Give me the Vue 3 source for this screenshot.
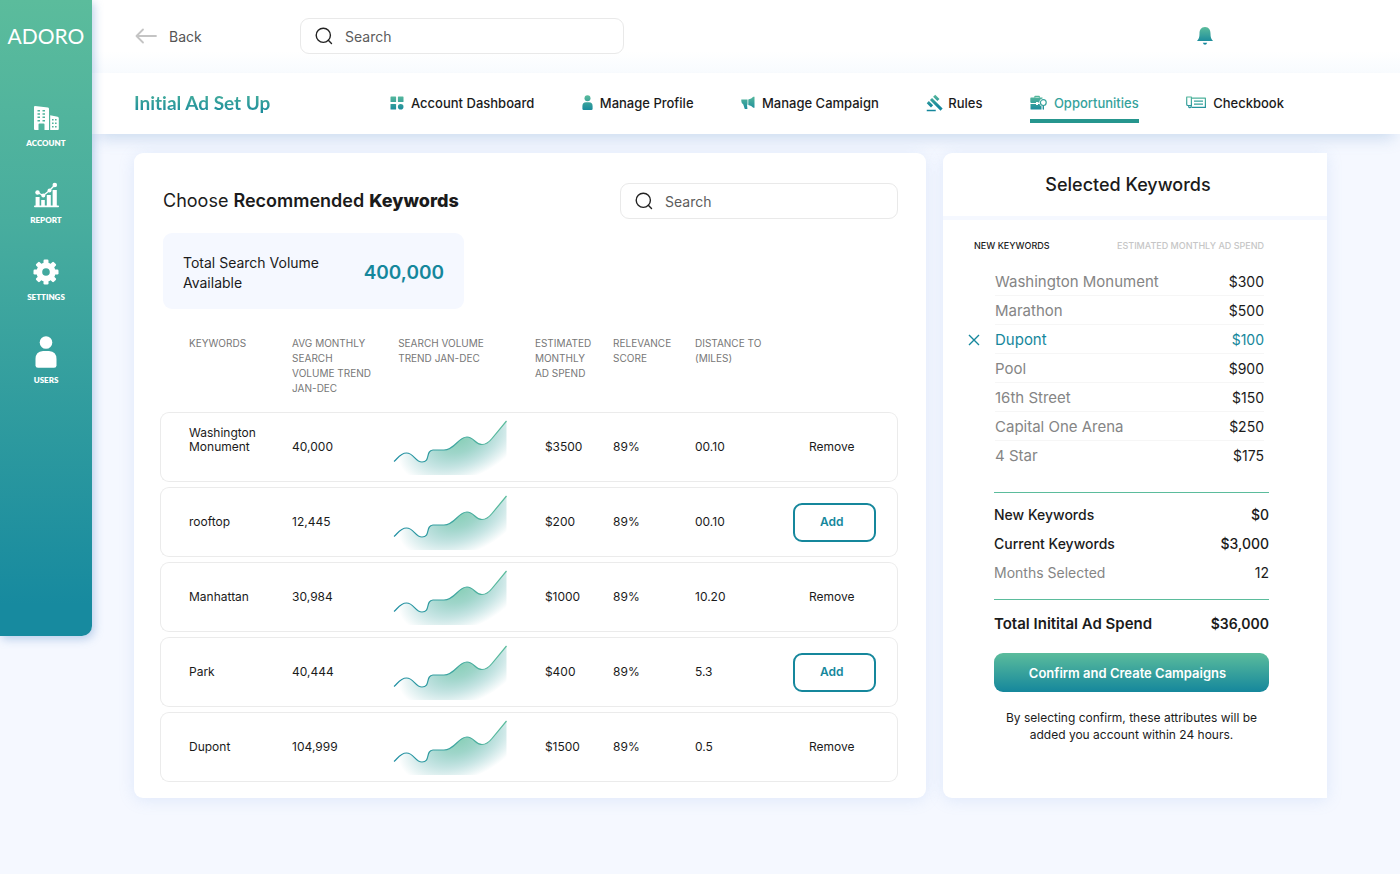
<script setup>
import { ref } from 'vue'

const search = ref('')
const keywordSearch = ref('')

const columns = [
  { key: 'name', label: 'Keywords' },
  { key: 'volume', label: 'Avg Monthly Search Volume Trend Jan-Dec' },
  { key: 'trend', label: 'Search Volume Trend Jan-Dec' },
  { key: 'spend', label: 'Estimated Monthly Ad Spend' },
  { key: 'score', label: 'Relevance Score' },
  { key: 'distance', label: 'Distance to (Miles)' },
]

const keywords = [
  { name: 'Washington Monument', volume: '40,000', spend: '$3500', score: '89%', distance: '00.10', added: true },
  { name: 'rooftop', volume: '12,445', spend: '$200', score: '89%', distance: '00.10', added: false },
  { name: 'Manhattan', volume: '30,984', spend: '$1000', score: '89%', distance: '10.20', added: true },
  { name: 'Park', volume: '40,444', spend: '$400', score: '89%', distance: '5.3', added: false },
  { name: 'Dupont', volume: '104,999', spend: '$1500', score: '89%', distance: '0.5', added: true },
]

const selected = [
  { name: 'Washington Monument', amount: '$300' },
  { name: 'Marathon', amount: '$500' },
  { name: 'Dupont', amount: '$100', active: true },
  { name: 'Pool', amount: '$900' },
  { name: '16th Street', amount: '$150' },
  { name: 'Capital One Arena', amount: '$250' },
  { name: '4 Star', amount: '$175' },
]
</script>

<template>
  <div class="page">
    <svg class="defs" width="0" height="0" aria-hidden="true">
      <defs>
        <linearGradient id="brand" gradientUnits="userSpaceOnUse" x1="0" y1="0" x2="0" y2="16">
          <stop offset="0" stop-color="#5bbc9c" />
          <stop offset="1" stop-color="#15879c" />
        </linearGradient>
        <linearGradient id="trendLine" gradientUnits="userSpaceOnUse" x1="0" y1="0" x2="114" y2="0">
          <stop offset="0" stop-color="#1f8ea3" />
          <stop offset="1" stop-color="#5bbc9c" />
        </linearGradient>
        <radialGradient
          id="trendArea"
          gradientUnits="userSpaceOnUse"
          cx="0"
          cy="0"
          r="1"
          gradientTransform="translate(68 21) rotate(-22) scale(66 39)"
        >
          <stop offset="0" stop-color="#5bbc9c" stop-opacity="0.7" />
          <stop offset="0.3" stop-color="#4fb39d" stop-opacity="0.55" />
          <stop offset="0.65" stop-color="#3aa39f" stop-opacity="0.28" />
          <stop offset="1" stop-color="#2f9aa0" stop-opacity="0" />
        </radialGradient>
      </defs>
    </svg>

    <aside class="sidebar">
      <div class="logo">ADORO</div>
      <nav class="side-nav" aria-label="Main">
        <a href="#account">
          <svg width="25" height="26" viewBox="0 0 25 26" fill="#fff" fill-rule="evenodd">
            <path
              d="M1 1L14 2.6Q15 2.8 15 4V25H10.5V19.5Q10.500 18.500 9.500 18.500H5.500Q4.500 18.500 4.500 19.500V25H1Q0 25 0 24V2Q0 1 1 1Z
              M3.500 5h2.500v1.500h-2.500zM8.500 5h2.500v1.500h-2.500zM3.500 8.300h2.500v1.500h-2.500zM8.500 8.300h2.500v1.500h-2.500z
              M3.500 11.600h2.500v1.500h-2.500zM8.500 11.600h2.500v1.500h-2.500zM3.500 14.900h2.500v1.500h-2.500zM8.500 14.900h2.500v1.500h-2.500z"
            />
            <path
              d="M16.200 10.300L23.600 11.800Q24.800 12 24.800 13.200V24Q24.800 25 23.800 25H16.200Z
              M18 14h1.600v1.600h-1.600zM21 14h1.600v1.600h-1.600zM18 17.500h1.600v1.600h-1.600zM21 17.500h1.600v1.600h-1.600zM18 21h1.600v1.600h-1.600zM21 21h1.600v1.600h-1.600z"
            />
          </svg>
          <span>ACCOUNT</span>
        </a>
        <a href="#report">
          <svg width="25" height="26" viewBox="0 0 25 26" fill="#fff">
            <rect x="0" y="23.600" width="25" height="1.600" rx="0.800" />
            <rect x="1.600" y="15" width="4" height="9" />
            <rect x="7.200" y="18" width="3.600" height="6" />
            <rect x="12.800" y="13" width="4" height="11" />
            <rect x="18.600" y="8" width="4.200" height="16" />
            <path d="M3.500 10.500L9.300 13.500L15.500 8.500L20.800 3" fill="none" stroke="#fff" stroke-width="1.400" />
            <circle cx="3.500" cy="10.500" r="2.200" />
            <circle cx="9.300" cy="13.500" r="2" />
            <circle cx="15.500" cy="8.500" r="2" />
            <circle cx="20.800" cy="3" r="2.300" />
          </svg>
          <span>REPORT</span>
        </a>
        <a href="#settings">
          <svg width="26" height="26" viewBox="-13 -13 26 26" fill="#fff">
            <circle r="6.700" fill="none" stroke="#fff" stroke-width="5.800" />
            <rect
              v-for="n in 8"
              :key="n"
              x="-2.500"
              y="-12.500"
              width="5"
              height="5"
              rx="1.200"
              :transform="`rotate(${n * 45})`"
            />
          </svg>
          <span>SETTINGS</span>
        </a>
        <a href="#users">
          <svg width="22" height="32" viewBox="0 0 22 32" fill="#fff">
            <circle cx="11" cy="6.500" r="6.300" />
            <path d="M8 15H14Q21.500 15.500 21.500 23V29.500Q21.500 31.800 19 31.800H3Q0.500 31.800 0.500 29.500V23Q0.500 15.500 8 15Z" />
          </svg>
          <span>USERS</span>
        </a>
      </nav>
    </aside>

    <div class="content">
      <header class="topbar">
        <a class="back" href="#back">
          <svg width="22" height="16" viewBox="0 0 22 16" fill="none" stroke="#c4c4c4" stroke-width="1.800" stroke-linecap="round" stroke-linejoin="round">
            <path d="M21 8H1.500M8 1.500L1.500 8L8 14.500" />
          </svg>
          Back
        </a>
        <label class="search search-main">
          <svg width="18" height="18" viewBox="0 0 18 18" fill="none" stroke="#222" stroke-width="1.400" stroke-linecap="round">
            <circle cx="8.300" cy="8.300" r="7.100" />
            <path d="M13.300 13.300L16.500 16.500" />
          </svg>
          <input v-model="search" type="text" placeholder="Search" aria-label="Search" />
        </label>
        <button class="bell" type="button" aria-label="Notifications">
          <svg width="16" height="18" viewBox="0 0 16 18">
            <path fill="url(#brand)" d="M8 0C12 0 13.500 3 13.500 6.500C13.500 10.500 14.200 12 16 14H0C1.800 12 2.500 10.500 2.500 6.500C2.500 3 4 0 8 0Z" />
            <path fill="#15879c" d="M5.800 15.800H10.200Q9.500 17.800 8 17.800Q6.500 17.800 5.800 15.800Z" />
          </svg>
        </button>
      </header>

      <div class="navbar">
        <h1>Initial Ad Set Up</h1>
        <nav class="tabs" aria-label="Ad set up">
          <a href="#dashboard">
            <svg width="14" height="16" viewBox="0 0 14 16" fill="url(#brand)">
              <rect x="0.500" y="1.500" width="5.600" height="5.600" rx="0.600" />
              <rect x="7.900" y="1.500" width="5.600" height="5.600" rx="0.600" />
              <rect x="0.500" y="8.900" width="5.600" height="5.600" rx="0.600" />
              <circle cx="10.700" cy="11.700" r="2.800" />
            </svg>
            Account Dashboard
          </a>
          <a href="#profile">
            <svg width="11" height="16" viewBox="0 0 11 16" fill="url(#brand)">
              <circle cx="5.500" cy="3.300" r="3" />
              <path d="M4 7.200H7Q10.600 7.500 10.600 11V13.800Q10.600 15 9.400 15H1.600Q0.400 15 0.400 13.800V11Q0.400 7.500 4 7.200Z" />
            </svg>
            Manage Profile
          </a>
          <a href="#campaign">
            <svg width="14" height="16" viewBox="0 0 14 16" fill="url(#brand)">
              <path d="M0.300 4.500H6.500V9.800H6L6.400 13.500Q6.400 14 5.900 14H4.300Q3.800 14 3.600 13.400L2.300 9.600Q0.300 8.500 0.300 6Z" />
              <path d="M7.300 4.500Q10.500 4 12.300 1.800H13.500V12.800H12.300Q10.500 10.300 7.300 9.900Z" />
            </svg>
            Manage Campaign
          </a>
          <a class="tight" href="#rules">
            <svg width="18" height="18" viewBox="0 0 24 24" fill="url(#brand)">
              <path
                d="M1 21h12v2H1zM5.240 8.070l2.830-2.830 14.140 14.140-2.830 2.830zM12.320 1l5.660 5.660-2.830 2.830-5.660-5.660zM3.830 9.480l5.660 5.660-2.830 2.830L1 12.310z"
              />
            </svg>
            Rules
          </a>
          <a class="active" href="#opportunities" aria-current="page">
            <svg width="17" height="16" viewBox="0 0 17 16" fill="url(#brand)">
              <path d="M4.300 2.800V1.600Q4.300 0.700 5.200 0.700H9Q9.900 0.700 9.900 1.600V2.800H8.800V1.900H5.400V2.800Z" />
              <path d="M1 2.600H12.500V3.600Q9.500 4.200 9.200 7.600H8V7H6V8H1Q0.300 7.500 0.300 6.500V3.500Q0.300 2.600 1 2.600Z" />
              <path d="M0.500 8.900H6V9.900H8V8.900H9.500Q10 10.500 11.500 11.300V14.600H1.200Q0.500 14.600 0.500 13.900Z" />
              <circle cx="13.300" cy="7.600" r="2.900" fill="none" stroke="#35a29c" stroke-width="1.200" />
              <path d="M12.600 10.500H14V14Q14 14.800 13.300 14.800Q12.600 14.800 12.600 14Z" />
            </svg>
            Opportunities
          </a>
          <a href="#checkbook">
            <svg width="20" height="16" viewBox="0 0 20 16" fill="none" stroke="url(#brand)" stroke-width="1.200" stroke-linejoin="round">
              <path d="M5.500 3.200H19.400V12.400H5.500" />
              <path d="M0.700 2H5.400V10.500H2Q0.700 10.500 0.700 9.200Z" />
              <path d="M2.500 10.500Q2.500 12.600 4 12.600Q5.400 12.400 5.400 10.500" />
              <path d="M8 6.200H17M8 9.200H17" stroke="#35a29c" />
            </svg>
            Checkbook
          </a>
        </nav>
      </div>

      <main class="panels">
        <section class="card recommended">
          <div class="card-head">
            <h2>Choose <span class="semi">Recommended</span> <span class="bold">Keywords</span></h2>
            <label class="search search-keywords">
              <svg width="18" height="18" viewBox="0 0 18 18" fill="none" stroke="#222" stroke-width="1.400" stroke-linecap="round">
                <circle cx="8.300" cy="8.300" r="7.100" />
                <path d="M13.300 13.300L16.500 16.500" />
              </svg>
              <input v-model="keywordSearch" type="text" placeholder="Search" aria-label="Search keywords" />
            </label>
          </div>

          <div class="total">
            <span>Total Search Volume Available</span>
            <strong>400,000</strong>
          </div>

          <table class="keywords">
            <colgroup>
              <col v-for="c in columns" :key="c.key" :class="'col-' + c.key" />
              <col />
            </colgroup>
            <thead>
              <tr>
                <th v-for="c in columns" :key="c.key" scope="col" :class="c.key">{{ c.label }}</th>
                <td></td>
              </tr>
            </thead>
            <tbody>
              <tr v-for="k in keywords" :key="k.name">
                <td class="name" :class="{ wraps: k.name.includes(' ') }">{{ k.name }}</td>
                <td>{{ k.volume }}</td>
                <td>
                  <svg class="trend" width="114" height="56" viewBox="0 0 114 56">
                    <path
                      fill="url(#trendArea)"
                      d="M1 42.500C4 40.500 7 34 13.500 34C21 34 22 43 29 43C38 43 32 31.500 40 31H51C62 31 65 18 74 18C81 18 82 25.500 89 25.500C94 25.500 97 22 99 19.500L113.500 2V56H1Z"
                    />
                    <path
                      fill="none"
                      stroke="url(#trendLine)"
                      stroke-width="1.200"
                      d="M1 42.500C4 40.500 7 34 13.500 34C21 34 22 43 29 43C38 43 32 31.500 40 31H51C62 31 65 18 74 18C81 18 82 25.500 89 25.500C94 25.500 97 22 99 19.500L113.500 2"
                    />
                  </svg>
                </td>
                <td class="spend">{{ k.spend }}</td>
                <td>{{ k.score }}</td>
                <td>{{ k.distance }}</td>
                <td>
                  <button v-if="k.added" class="row-action" type="button">Remove</button>
                  <button v-else class="row-action add" type="button">Add</button>
                </td>
              </tr>
            </tbody>
          </table>
        </section>

        <section class="card selection">
          <h2>Selected Keywords</h2>
          <table class="selected">
            <colgroup>
              <col class="col-remove" />
              <col class="col-heading" />
              <col />
              <col class="col-amount" />
            </colgroup>
            <thead>
              <tr>
                <th scope="col" colspan="2">New Keywords</th>
                <th scope="col" colspan="2" class="amount">Estimated Monthly Ad Spend</th>
              </tr>
            </thead>
            <tbody>
              <tr v-for="s in selected" :key="s.name" :class="{ active: s.active }">
                <td class="remove">
                  <button v-if="s.active" type="button" :aria-label="'Remove ' + s.name">
                    <svg width="12" height="12" viewBox="0 0 12 12" fill="none" stroke="#15879c" stroke-width="1.400">
                      <path d="M1 1L11 11M11 1L1 11" />
                    </svg>
                  </button>
                </td>
                <td colspan="2">{{ s.name }}</td>
                <td class="amount">{{ s.amount }}</td>
              </tr>
            </tbody>
          </table>

          <div class="summary">
            <dl class="figures">
              <div><dt>New Keywords</dt><dd>$0</dd></div>
              <div><dt>Current Keywords</dt><dd>$3,000</dd></div>
              <div class="light"><dt>Months Selected</dt><dd>12</dd></div>
            </dl>
            <dl class="grand">
              <div><dt>Total Initital Ad Spend</dt><dd>$36,000</dd></div>
            </dl>
            <button class="confirm" type="button">Confirm and Create Campaigns</button>
            <p>By selecting confirm, these attributes will be added you account within 24 hours.</p>
          </div>
        </section>
      </main>
    </div>
  </div>
</template>

<style>
body {
  background: #f5f8ff;
}
</style>

<style scoped>
.page {
  display: flex;
  align-items: flex-start;
  min-height: 100vh;
  font-family: Inter, "Open Sans", sans-serif;
  font-size: 12px;
  color: #1b1b1b;
  background: #f5f8ff;
}
.page * {
  box-sizing: border-box;
}
.defs {
  position: absolute;
}
a {
  color: inherit;
  text-decoration: none;
}
button,
input {
  font: inherit;
  color: inherit;
  background: none;
  border: 0;
  padding: 0;
}
button {
  cursor: pointer;
}
h1,
h2,
p,
dl,
dd {
  margin: 0;
}

.sidebar {
  position: relative;
  z-index: 1;
  flex: 0 0 92px;
  padding: 23px 0 251px;
  color: #fff;
  text-align: center;
  background: linear-gradient(#5bbc9c, #48ad9e 35%, #178a9f 95%);
  border-radius: 0 0 10px 0;
  box-shadow: 2px 3px 10px rgba(90, 140, 200, 0.4);
}
.logo {
  font: 400 21px/26px Lato, sans-serif;
}
.side-nav {
  display: flex;
  flex-direction: column;
  gap: 34px;
  margin-top: 56px;
}
.side-nav a {
  display: flex;
  flex-direction: column;
  align-items: center;
  gap: 7px;
  font: 800 8px/10px Lato, sans-serif;
}

.content {
  flex: 1;
  min-width: 0;
}
.topbar {
  display: flex;
  align-items: center;
  height: 73px;
  padding: 0 187px 1px 43px;
  background: linear-gradient(#fff 70%, #f8fbfe);
}
.back {
  display: flex;
  align-items: center;
  gap: 12px;
  width: 165px;
  font-size: 14px;
  color: #555;
}
.search {
  display: flex;
  align-items: center;
  gap: 12px;
  height: 36px;
  padding: 0 14px;
  background: #fff;
  border: 1px solid #e9e9e9;
  border-radius: 9px;
}
.search svg {
  flex: none;
}
.search input {
  width: 100%;
  min-width: 0;
  font-size: 14px;
  color: #555;
  outline: none;
}
.search input::placeholder {
  color: #5c5c5c;
  opacity: 1;
}
.search-main {
  flex: 0 1 324px;
}
.search-keywords {
  flex: 0 1 278px;
}
.bell {
  display: flex;
  margin-left: auto;
}

.navbar {
  display: flex;
  align-items: center;
  height: 61px;
  padding: 0 116px 2px 42px;
  background: #fff;
  box-shadow: 0 10px 16px -6px rgba(90, 140, 195, 0.28);
}
h1 {
  flex: 0 0 256px;
  font: 700 19px/24px Lato, sans-serif;
  font-variant-ligatures: none;
  color: transparent;
  background: linear-gradient(#4db39c, #15879c);
  background-clip: text;
}
.tabs {
  display: flex;
  flex: 1;
  justify-content: space-between;
}
.tabs a {
  display: flex;
  align-items: center;
  gap: 7px;
  height: 40px;
  font-size: 13px;
  font-weight: 500;
  white-space: nowrap;
  border: solid transparent;
  border-width: 4px 0;
}
.tabs .tight {
  gap: 4px;
}
.tabs .active {
  color: #35a29c;
  border-bottom-color: #26968e;
}

.panels {
  display: grid;
  grid-template-columns: minmax(0, 792fr) minmax(0, 384fr);
  gap: 17px;
  padding: 19px 73px 76px 42px;
}
.card {
  background: #fff;
  border-radius: 9px;
  box-shadow: 0 2px 16px rgba(120, 160, 230, 0.18);
}
.recommended {
  padding: 30px 28px 11px 26px;
}
.card-head {
  display: flex;
  align-items: center;
  justify-content: space-between;
  padding-left: 3px;
}
h2 {
  font-size: 18px;
  font-weight: 400;
  line-height: 24px;
}
.semi {
  font-weight: 600;
}
.bold {
  font-weight: 800;
}
.total {
  display: flex;
  align-items: center;
  justify-content: space-between;
  width: 301px;
  margin: 14px 0 22px 3px;
  padding: 20px 20px 16px;
  font-size: 14px;
  line-height: 20px;
  background: #f5f8ff;
  border-radius: 9px;
}
.total span {
  width: 150px;
}
.total strong {
  font-size: 19px;
  font-weight: 600;
  color: #15879c;
}

.keywords {
  width: 100%;
  table-layout: fixed;
  border-collapse: separate;
  border-spacing: 0 5px;
  line-height: 14px;
}
.col-name { width: 17.9%; }
.col-volume { width: 13.7%; }
.col-trend { width: 19.2%; }
.col-spend { width: 10.6%; }
.col-score { width: 11.1%; }
.col-distance { width: 13.3%; }
.keywords th,
.selected th {
  font-size: 10px;
  font-weight: 400;
  line-height: 15px;
  text-align: left;
  text-transform: uppercase;
}
.keywords th {
  height: 71px;
  padding: 0 18px 0 0;
  color: #777;
  vertical-align: top;
}
.keywords th.name {
  padding-left: 29px;
}
.keywords th.trend {
  padding: 0 40px 0 5px;
}
.keywords th.spend {
  padding-right: 16px;
}
.keywords tbody td {
  height: 70px;
  padding: 0;
  vertical-align: middle;
  border: solid #ebebeb;
  border-width: 1px 0;
}
.keywords tbody td:first-child {
  padding: 0 24px 0 28px;
  border-left-width: 1px;
  border-radius: 9px 0 0 9px;
}
.keywords tbody td:last-child {
  border-right-width: 1px;
  border-radius: 0 9px 9px 0;
}
.keywords tbody td.wraps {
  padding-bottom: 14px;
}
.keywords tbody td.spend {
  padding-left: 10px;
}
.trend {
  display: block;
}
.row-action {
  width: 83px;
  height: 39px;
  padding-right: 6px;
}
.row-action.add {
  font-weight: 600;
  color: #15879c;
  border: 2px solid #15879c;
  border-radius: 9px;
}

.selection {
  padding-bottom: 55px;
  border-radius: 9px 0 0 9px;
}
.selection h2 {
  padding: 20px 14px 19px 0;
  font-weight: 500;
  text-align: center;
  border-bottom: 4px solid #f5f8ff;
}
.selected {
  width: calc(100% - 86px);
  margin: 18px 63px 0 23px;
  table-layout: fixed;
  border-collapse: separate;
  border-spacing: 0;
  font-size: 15px;
  color: #858585;
  white-space: nowrap;
}
.col-remove { width: 29px; }
.col-heading { width: 84px; }
.col-amount { width: 60px; }
.selected th {
  height: 29px;
  padding: 0 0 14px 8px;
  font-size: 9px;
  font-weight: 500;
  color: #1b1b1b;
}
.selected th.amount {
  color: #c6c6c6;
}
.selected td {
  height: 29px;
  padding: 0;
  border-bottom: 1px solid #f6f6f6;
}
.selected td.remove {
  border-bottom: 0;
}
.selected tbody tr:last-child td {
  border-bottom: 0;
}
.selected .amount {
  text-align: right;
}
.selected td.amount {
  font-size: 14px;
  color: #1b1b1b;
}
.selected .active td {
  color: #15879c;
}
.remove button {
  display: flex;
  margin-left: 2px;
}

.summary {
  padding: 0 58px 0 51px;
}
.summary dl > div {
  display: flex;
  justify-content: space-between;
  font-size: 14px;
  font-weight: 500;
  line-height: 29px;
}
.figures {
  margin-top: 22px;
  padding: 7px 0 12px;
  border: solid #5bbc9c;
  border-width: 1px 0;
}
.summary dl > .light {
  font-weight: 400;
}
.light dt {
  color: #858585;
}
.grand {
  padding: 9px 0 15px;
}
.summary .grand > div {
  font-weight: 600;
}
.grand dt {
  font-size: 15px;
}
.confirm {
  display: block;
  width: 100%;
  height: 39px;
  padding-right: 8px;
  font-size: 13px;
  font-weight: 600;
  color: #fff;
  background: linear-gradient(#5bbc9c, #15879c);
  border-radius: 9px;
}
.summary p {
  margin-top: 17px;
  line-height: 17px;
  text-align: center;
}
</style>
